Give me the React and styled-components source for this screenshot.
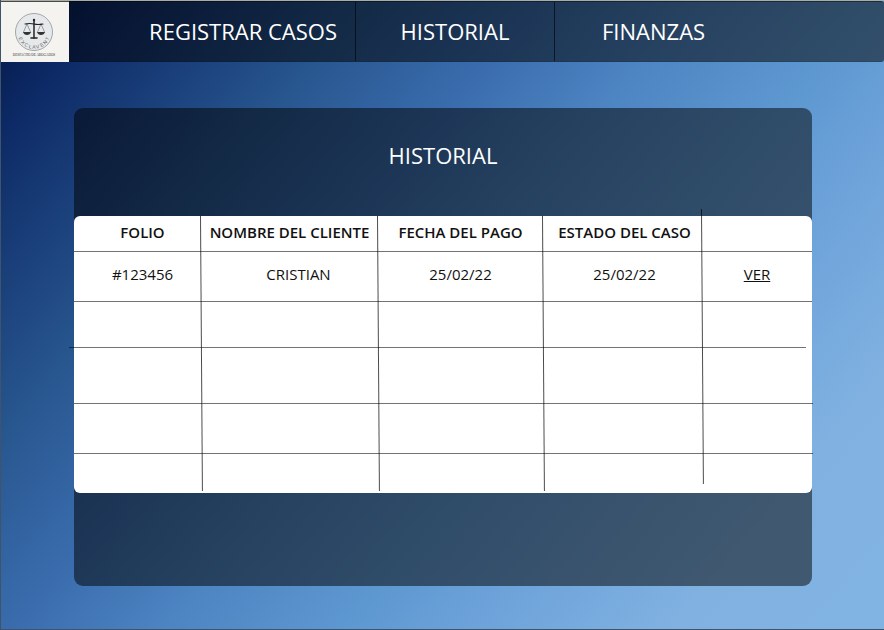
import React from "react";
import styled, { createGlobalStyle } from "styled-components";

const GlobalStyle = createGlobalStyle`
  *, *::before, *::after { box-sizing: border-box; }
  body { margin: 0; font-family: "Open Sans", "Noto Sans", sans-serif; }
`;

const Page = styled.div`
  min-height: 100vh;
  border: solid #3f5468;
  border-width: 0 0 1px 1px;
  background: linear-gradient(130deg, #031546 0%, #0d2a66 8%, #28568f 26%, #3a6cad 38%, #4d84c2 49%, #5e98d1 62%, #70a5db 73%, #80b1e1 85%, #82b4e3 100%);
`;

const TopBar = styled.header`
  display: flex;
  height: 62px;
  border-top: 1px solid #a9aca6;
`;

const LogoLink = styled.a`
  flex: 0 0 68px;
  background: #f4f3ef;
  border-top: 1px solid #4a4a48;
  svg { display: block; }
`;

const Nav = styled.nav`
  flex: 1;
  display: grid;
  grid-template-columns: 286fr 199fr 330fr;
  background: rgba(0, 0, 0, 0.5);
  border-top: 1px solid rgba(0, 0, 0, 0.4);
  border-bottom: 1px solid rgba(0, 0, 0, 0.1);
  border-radius: 0 3px 3px 0;
`;

const NavLink = styled.a`
  display: flex;
  align-items: center;
  justify-content: ${(p) => p.$align || "center"};
  padding: 0 ${(p) => p.$pad || 0}px 2px;
  color: #fff;
  font-size: 22px;
  line-height: 30px;
  text-decoration: none;
  white-space: nowrap;
  & + & { border-left: 1px solid rgba(0, 0, 0, 0.6); }
`;

const Main = styled.main`
  padding: 46px 72px 43px 73px;
`;

const Panel = styled.section`
  border-radius: 9px;
  background: rgba(0, 0, 0, 0.5);
  padding-bottom: 93px;
`;

const Title = styled.h1`
  margin: 0;
  padding: 32px 0 46px;
  color: #fff;
  font-size: 22px;
  line-height: 30px;
  font-weight: 400;
  text-align: center;
`;

const CaseTable = styled.table`
  width: 100%;
  table-layout: fixed;
  border-collapse: separate;
  border-spacing: 0;
  border-radius: 6px;
  background: #fff;
  color: #111;
  font-size: 15px;
  line-height: 20px;
`;

const Col = styled.col`
  width: ${(p) => p.$width}px;
`;

const Row = styled.tr`
  position: relative;
  height: ${(p) => p.$height}px;
  &::after {
    content: "";
    display: ${(p) => (p.$last ? "none" : "block")};
    position: absolute;
    bottom: 0;
    left: ${(p) => p.$start || 0}px;
    right: ${(p) => p.$end || 0}px;
    height: 1px;
    background: rgba(0, 0, 0, 0.55);
  }
`;

const HeadCell = styled.th`
  position: relative;
  padding: 0 0 4px ${(p) => p.$indent || 0}px;
  font-weight: 600;
  white-space: nowrap;
  &:not(:last-child)::after {
    content: "";
    position: absolute;
    top: ${(p) => p.$ruleTop || 0}px;
    right: 0;
    width: 1px;
    height: 275px;
    background: rgba(0, 0, 0, 0.7);
    transform: rotate(-0.4deg);
    transform-origin: top;
  }
`;

const Cell = styled.td`
  padding: 0 0 6px ${(p) => p.$indent || 0}px;
  text-align: center;
`;

const ViewLink = styled.a`
  color: inherit;
  text-decoration-thickness: 1px;
`;

const columns = [
  { label: "FOLIO", width: 127, indent: 10 },
  { label: "NOMBRE DEL CLIENTE", width: 177 },
  { label: "FECHA DEL PAGO", width: 165 },
  { label: "ESTADO DEL CASO", width: 159, indent: 4, ruleTop: -7 },
  { label: "", width: 110 },
];

const emptyRows = [
  { height: 46, start: -5, end: 6 },
  { height: 56, end: -1 },
  { height: 50, end: -1 },
  { height: 39, last: true },
];

function Logo() {
  return (
    <svg width="68" height="60" viewBox="0 0 68 60" role="img" aria-label="Despacho de abogados">
      <circle cx="33" cy="30" r="18.5" fill="#e6e9eb" stroke="#a3a6a8" strokeWidth="1" />
      <g stroke="#222" fill="none" strokeLinecap="round">
        <path d="M33 18v18" strokeWidth="1.5" />
        <path d="M24 22q5-1 9 0q4 1 9 0" strokeWidth="1.2" />
        <path d="M26 22l-3.500 8M26 22l3.500 8M40 22l-3.500 8M40 22l3.500 8" strokeWidth=".4" />
        <path d="M30 36h6" strokeWidth="1.600" />
      </g>
      <path d="M22 30h8q-1 3-4 3t-4-3zM36 30h8q-1 3-4 3t-4-3z" fill="#333" />
      <circle cx="33" cy="18" r="1.200" fill="#222" />
      <path id="seal" d="M17.500 36a16.500 16.500 0 0 0 31 0" fill="none" />
      <text fontFamily="Liberation Sans, sans-serif" fontSize="5" fill="#666" textAnchor="middle">
        <textPath href="#seal" startOffset="50%">E X C L A V E N T</textPath>
      </text>
      <text x="33" y="54" fontFamily="Liberation Serif, serif" fontSize="3.4" fill="#333" textAnchor="middle">DESPACHO DE ABOGADOS</text>
    </svg>
  );
}

export default function App() {
  return (
    <>
      <GlobalStyle />
      <Page>
        <TopBar>
          <LogoLink href="#inicio"><Logo /></LogoLink>
          <Nav>
            <NavLink href="#registrar" $align="flex-end" $pad={18}>REGISTRAR CASOS</NavLink>
            <NavLink href="#historial">HISTORIAL</NavLink>
            <NavLink href="#finanzas" $align="flex-start" $pad={47}>FINANZAS</NavLink>
          </Nav>
        </TopBar>
        <Main>
          <Panel>
            <Title>HISTORIAL</Title>
            <CaseTable>
              <colgroup>
                {columns.map((c) => <Col key={c.label} $width={c.width} />)}
              </colgroup>
              <thead>
                <Row $height={36}>
                  {columns.map((c) => (
                    <HeadCell key={c.label} scope="col" $indent={c.indent} $ruleTop={c.ruleTop}>{c.label}</HeadCell>
                  ))}
                </Row>
              </thead>
              <tbody>
                <Row $height={50}>
                  <Cell $indent={10}>#123456</Cell>
                  <Cell $indent={18}>CRISTIAN</Cell>
                  <Cell>25/02/22</Cell>
                  <Cell $indent={4}>25/02/22</Cell>
                  <Cell><ViewLink href="#caso-123456">VER</ViewLink></Cell>
                </Row>
                {emptyRows.map((r) => (
                  <Row key={r.height} $height={r.height} $start={r.start} $end={r.end} $last={r.last}>
                    {columns.map((c) => <Cell key={c.label} />)}
                  </Row>
                ))}
              </tbody>
            </CaseTable>
          </Panel>
        </Main>
      </Page>
    </>
  );
}
